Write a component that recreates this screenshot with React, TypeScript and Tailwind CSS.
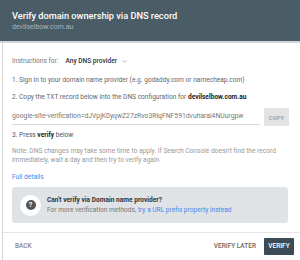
import { ChevronDown } from 'lucide-react';

const TXT = 'google-site-verification=dJVpjK0yqwZ27zRvo3RlqFNF591dvuharal4NUurgpw';

export default function App() {
  return (
    <div className="w-[300px] h-[260px] overflow-hidden bg-white font-['Roboto',sans-serif] flex flex-col">
      {/* header */}
      <div className="h-[41px] shrink-0 bg-[#4a5c66] px-3 pt-[10px]">
        <div className="text-[9.2px] leading-[12px] font-medium text-white">
          Verify domain ownership via DNS record
        </div>
        <div className="text-[7px] leading-[10px] text-[#a9b5bc]">devilselbow.com.au</div>
      </div>
      <div className="h-[2px] shrink-0 bg-[#cfd6da]" />

      <div className="flex-1 ml-[2px] border-l border-[#d4d4d4] flex flex-col">
        <div className="px-[9px] pt-[14px] text-[6.6px] text-[#666]">
          <div className="flex items-center h-[10px] gap-[7px]">
            <span className="text-[#777]">Instructions for:</span>
            <span className="flex items-center gap-[4px] font-medium text-[#333]">
              Any DNS provider
              <ChevronDown className="w-[7px] h-[7px] text-[#999]" strokeWidth={2.5} />
            </span>
          </div>
          <div className="mt-[8px] h-[10px] leading-[10px]">
            1. Sign in to your domain name provider (e.g. godaddy.com or namecheap.com)
          </div>
          <div className="mt-[7px] h-[10px] leading-[10px]">
            2. Copy the TXT record below into the DNS configuration for{' '}
            <b className="text-[#222] font-bold">devilselbow.com.au</b>
          </div>

          <div className="mt-[6px] flex items-end gap-[4px]">
            <div className="w-[248px] h-[16px] border-b border-[#d6d6d6] text-[6.8px] leading-[14px] text-[#777] whitespace-nowrap overflow-hidden">
              {TXT}
            </div>
            <button className="w-[25px] h-[18px] bg-[#e3e3e3] rounded-[1px] text-[6px] font-medium text-[#999] mb-[-1px]">
              COPY
            </button>
          </div>

          <div className="mt-[5px] h-[10px] leading-[10px] text-[#555]">
            3. Press <b className="text-[#222]">verify</b> below
          </div>
          <div className="mt-[7px] leading-[9px] text-[#999] pr-2">
            Note: DNS changes may take some time to apply. If Search Console doesn't find the record immediately, wait a day and then try to verify again
          </div>
          <div className="mt-[7px] h-[10px] leading-[10px] text-[#4a86e8]">Full details</div>

          <div className="mt-[5px] w-[276px] h-[36px] rounded-[3px] bg-[#dfe3e6] flex items-center pl-[8px] gap-[6px]">
            <div className="w-[21px] h-[21px] rounded-full bg-white flex items-center justify-center">
              <div className="w-[10px] h-[10px] rounded-full bg-[#555] text-white text-[7px] font-bold leading-[10px] text-center">
                ?
              </div>
            </div>
            <div className="flex flex-col leading-[10px]">
              <span className="font-bold text-[#333]">Can't verify via Domain name provider?</span>
              <span className="text-[#777]">
                For more verification methods,{' '}
                <span className="text-[#4a86e8]">try a URL prefix property instead</span>
              </span>
            </div>
          </div>
        </div>

        <div className="mt-[9px] h-px bg-[#e6e6e6]" />
        <div className="flex-1 flex items-center justify-between pl-[12px] pr-[6px] text-[6.5px] font-medium text-[#888]">
          <span>BACK</span>
          <div className="flex items-center gap-[8px]">
            <span className="text-[#666]">VERIFY LATER</span>
            <button className="w-[30px] h-[17px] bg-[#3b4c56] text-white rounded-[1px] text-[6.5px] font-medium">
              VERIFY
            </button>
          </div>
        </div>
      </div>
    </div>
  );
}
